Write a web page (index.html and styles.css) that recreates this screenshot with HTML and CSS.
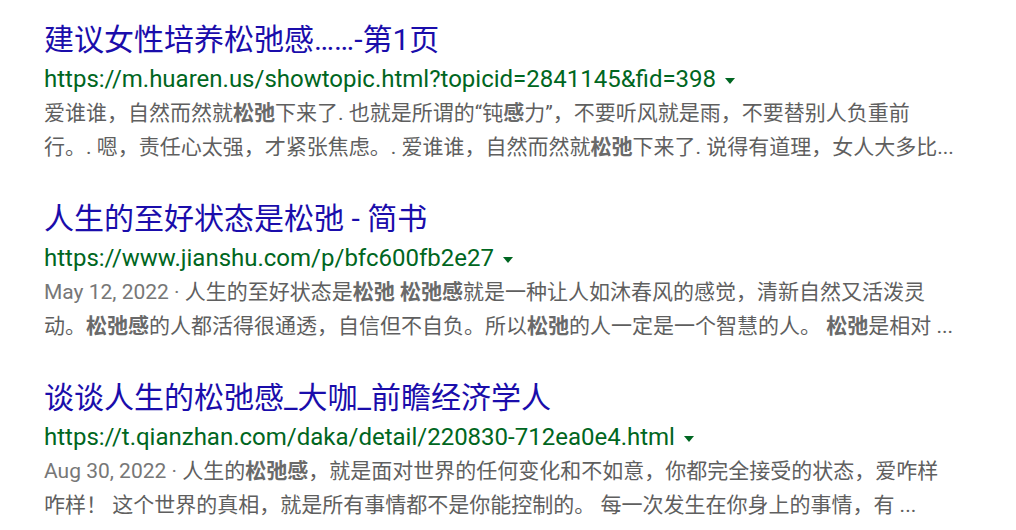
FILE: index.html
```html
<!DOCTYPE html>
<html lang="zh">
<head>
    <meta charset="UTF-8">
    <meta name="viewport" content="width=device-width, initial-scale=1.0">
    <title>松弛感 - 搜索结果</title>
    <link rel="stylesheet" href="styles.css">
</head>
<body>
    <div class="results">
        <div class="result">
            <a class="title" href="#">建议女性培养松弛感……-第1页</a>
            <div class="url">https://m.huaren.us/showtopic.html?topicid=2841145&amp;fid=398<span class="arrow"></span></div>
            <div class="snippet">爱谁谁，自然而然就<b>松弛</b>下来了. 也就是所谓的“钝<b>感</b>力”，不要听风就是雨，不要替别人负重前<br>行。. 嗯，责任心太强，才紧张焦虑。. 爱谁谁，自然而然就<b>松弛</b>下来了. 说得有道理，女人大多比...</div>
        </div>

        <div class="result">
            <a class="title" href="#">人生的至好状态是松弛 - 简书</a>
            <div class="url">https://www.jianshu.com/p/bfc600fb2e27<span class="arrow"></span></div>
            <div class="snippet"><span class="date">May 12, 2022 · </span>人生的至好状态是<b>松弛 松弛感</b>就是一种让人如沐春风的感觉，清新自然又活泼灵<br>动。<b>松弛感</b>的人都活得很通透，自信但不自负。所以<b>松弛</b>的人一定是一个智慧的人。 <b>松弛</b>是相对 ...</div>
        </div>

        <div class="result">
            <a class="title" href="#">谈谈人生的松弛感_大咖_前瞻经济学人</a>
            <div class="url">https://t.qianzhan.com/daka/detail/220830-712ea0e4.html<span class="arrow"></span></div>
            <div class="snippet"><span class="date">Aug 30, 2022 · </span>人生的<b>松弛感</b>，就是面对世界的任何变化和不如意，你都完全接受的状态，爱咋样<br>咋样！ 这个世界的真相，就是所有事情都不是你能控制的。 每一次发生在你身上的事情，有 ...</div>
        </div>
    </div>
</body>
</html>
```

FILE: styles.css
```css
/* Página de resultados */
body {
    margin: 0;
    font-family: Roboto, "Noto Sans CJK SC", sans-serif;
    background-color: #ffffff;
}

.results {
    padding: 22px 0 0 44px;
}

.result {
    margin-bottom: 37px;
}
.result:last-child {
    margin-bottom: 0;
}

/* Título */
.title {
    display: block;
    font-size: 30px;
    line-height: 36px;
    color: #1a0dab;
    text-decoration: none;
    white-space: nowrap;
}

/* URL verde con flecha */
.url {
    margin-top: 4px;
    font-size: 24px;
    line-height: 34px;
    color: #006621;
    white-space: nowrap;
}
.arrow {
    display: inline-block;
    margin-left: 9px;
    vertical-align: middle;
    border-left: 5px solid transparent;
    border-right: 5px solid transparent;
    border-top: 6px solid #006621;
}

/* Fragmento */
.snippet {
    font-size: 21px;
    line-height: 34px;
    color: #5f5f5f;
    white-space: nowrap;
}
.snippet b {
    color: #6a6a6a;
}
.date {
    color: #777777;
}
```
